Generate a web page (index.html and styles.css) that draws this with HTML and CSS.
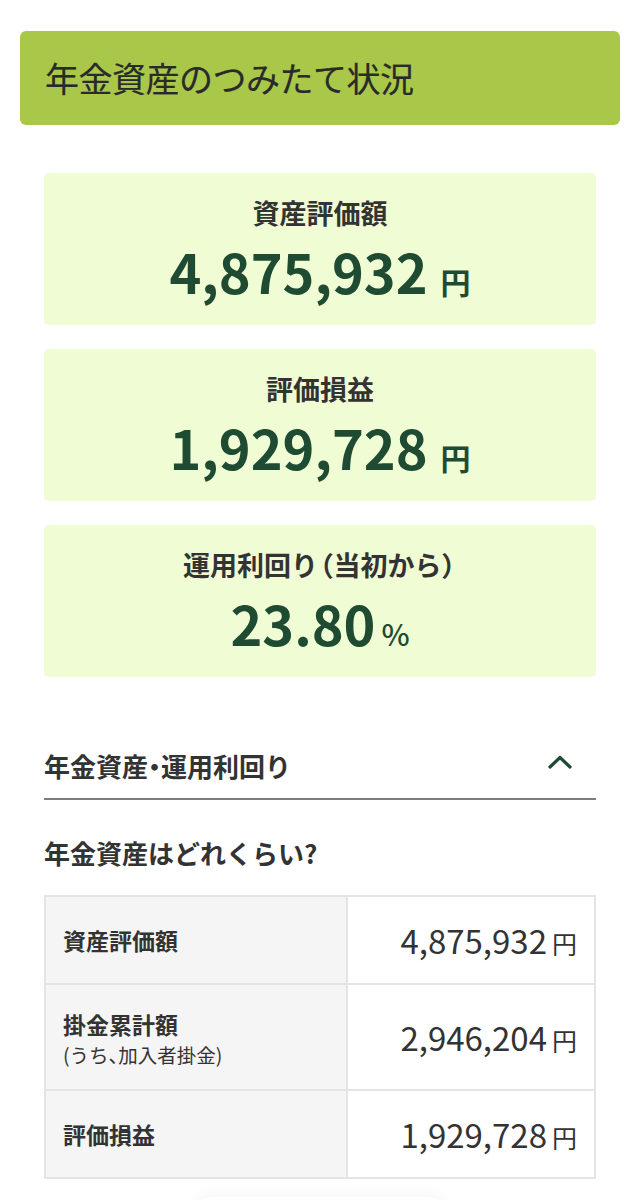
FILE: index.html
```html
<!DOCTYPE html>
<html lang="ja">
<head>
<meta charset="utf-8">
<title>年金資産のつみたて状況</title>
<link rel="stylesheet" href="styles.css">
</head>
<body>
<div class="page">
  <header class="banner"><h1 class="banner-title">年金資産のつみたて状況</h1></header>

  <div class="summary">
    <div class="card">
      <p class="card-label">資産評価額</p>
      <p class="card-value"><span class="num">4,875,932</span><span class="unit">円</span></p>
    </div>
    <div class="card">
      <p class="card-label">評価損益</p>
      <p class="card-value"><span class="num">1,929,728</span><span class="unit">円</span></p>
    </div>
    <div class="card">
      <p class="card-label">運用利回り<span class="paren">（</span>当初から<span class="paren">）</span></p>
      <p class="card-value"><span class="num">23.80</span><span class="unit pct">%</span></p>
    </div>
  </div>

  <section class="acc">
    <div class="acc-head">
      <h2 class="acc-title">年金資産<span class="dot">・</span>運用利回り</h2>
      <svg class="chev" width="24" height="14" viewBox="0 0 24 14" aria-hidden="true"><polyline points="2,12 12,2.5 22,12" fill="none" stroke="#1e4b32" stroke-width="3.2" stroke-linecap="round" stroke-linejoin="round"/></svg>
    </div>
    <h3 class="sub-title">年金資産はどれくらい?</h3>
    <table class="tbl">
      <tr class="row">
        <th class="lab">資産評価額</th>
        <td class="val"><span class="vnum">4,875,932</span><span class="vunit">円</span></td>
      </tr>
      <tr class="row row-tall">
        <th class="lab">掛金累計額<span class="lab-sub">(うち<span class="comma">、</span>加入者掛金)</span></th>
        <td class="val"><span class="vnum">2,946,204</span><span class="vunit">円</span></td>
      </tr>
      <tr class="row">
        <th class="lab">評価損益</th>
        <td class="val"><span class="vnum">1,929,728</span><span class="vunit">円</span></td>
      </tr>
    </table>
    <div class="more"></div>
  </section>
</div>
</body>
</html>
```

FILE: styles.css
```css
html, body {
  margin: 0;
  padding: 0;
  background: #ffffff;
}
body {
  font-family: "Noto Sans CJK JP", "Noto Sans", sans-serif;
  color: #333333;
}
.page {
  padding: 31px 20px 0;
}
.banner {
  background: #a9c84a;
  border-radius: 6px;
  height: 94px;
  display: flex;
  align-items: center;
  padding: 0 25px;
  box-sizing: border-box;
}
.banner-title {
  margin: 0;
  font-size: 34px;
  font-weight: 400;
  line-height: 1;
  color: #2a2a2a;
  letter-spacing: -0.5px;
  -webkit-text-stroke: 0.2px #2a2a2a;
}
.summary {
  padding: 48px 24px 0;
  display: flex;
  flex-direction: column;
  gap: 24px;
}
.card {
  background: #effcd4;
  border-radius: 5px;
  height: 152px;
  box-sizing: border-box;
  padding-top: 24px;
  display: flex;
  flex-direction: column;
  align-items: center;
}
.card-label {
  margin: 0;
  font-size: 27px;
  font-weight: 700;
  line-height: 32px;
  color: #333333;
}
.paren {
  font-feature-settings: "palt";
  margin: 0 1px;
}
.card-value {
  margin: 6px 0 0;
  height: 72px;
  display: flex;
  align-items: baseline;
  line-height: 72px;
  color: #1e4b32;
}
.num {
  font-size: 54px;
  font-weight: 700;
}
.unit {
  font-size: 30px;
  font-weight: 700;
  margin-left: 13px;
}
.unit.pct {
  font-size: 30px;
  font-weight: 500;
  margin-left: 6px;
}
.acc {
  padding: 0 24px;
}
.acc-head {
  margin-top: 56px;
  height: 67px;
  box-sizing: border-box;
  border-bottom: 2px solid #7d7d7d;
  display: flex;
  align-items: center;
  justify-content: space-between;
  padding-right: 24px;
}
.acc-title {
  margin: 0;
  font-size: 26px;
  font-weight: 700;
  line-height: 1;
  color: #333333;
}
.dot {
  font-feature-settings: "palt";
}
.chev {
  display: block;
  margin-bottom: 8px;
}
.sub-title {
  margin: 35px 0 24px;
  font-size: 26px;
  font-weight: 700;
  line-height: 36px;
  color: #333333;
}
.tbl {
  width: 100%;
  border-collapse: collapse;
  border: 2px solid #e4e4e4;
}
.row th, .row td {
  border: 2px solid #e4e4e4;
  height: 86px;
  padding: 0;
  vertical-align: middle;
}
.row-tall th, .row-tall td {
  height: 104px;
}
.lab {
  width: 283px;
  background: #f5f5f5;
  text-align: left;
  padding-left: 17px !important;
  font-size: 23px;
  font-weight: 700;
  line-height: 34px;
  color: #333333;
}
.lab-sub {
  display: block;
  font-size: 19.5px;
  font-weight: 400;
  line-height: 27px;
}
.comma {
  font-feature-settings: "palt";
}
.val {
  text-align: right;
  padding-right: 17px !important;
  background: #ffffff;
  white-space: nowrap;
}
.vnum {
  font-size: 33px;
  font-weight: 400;
  color: #333333;
}
.vunit {
  font-size: 25px;
  font-weight: 400;
  margin-left: 5px;
  color: #333333;
}
.more {
  width: 260px;
  height: 48px;
  margin: 18px auto 0;
  border-radius: 24px;
  background: #ffffff;
  box-shadow: 0 -4px 14px rgba(0, 0, 0, 0.035);
}
```
